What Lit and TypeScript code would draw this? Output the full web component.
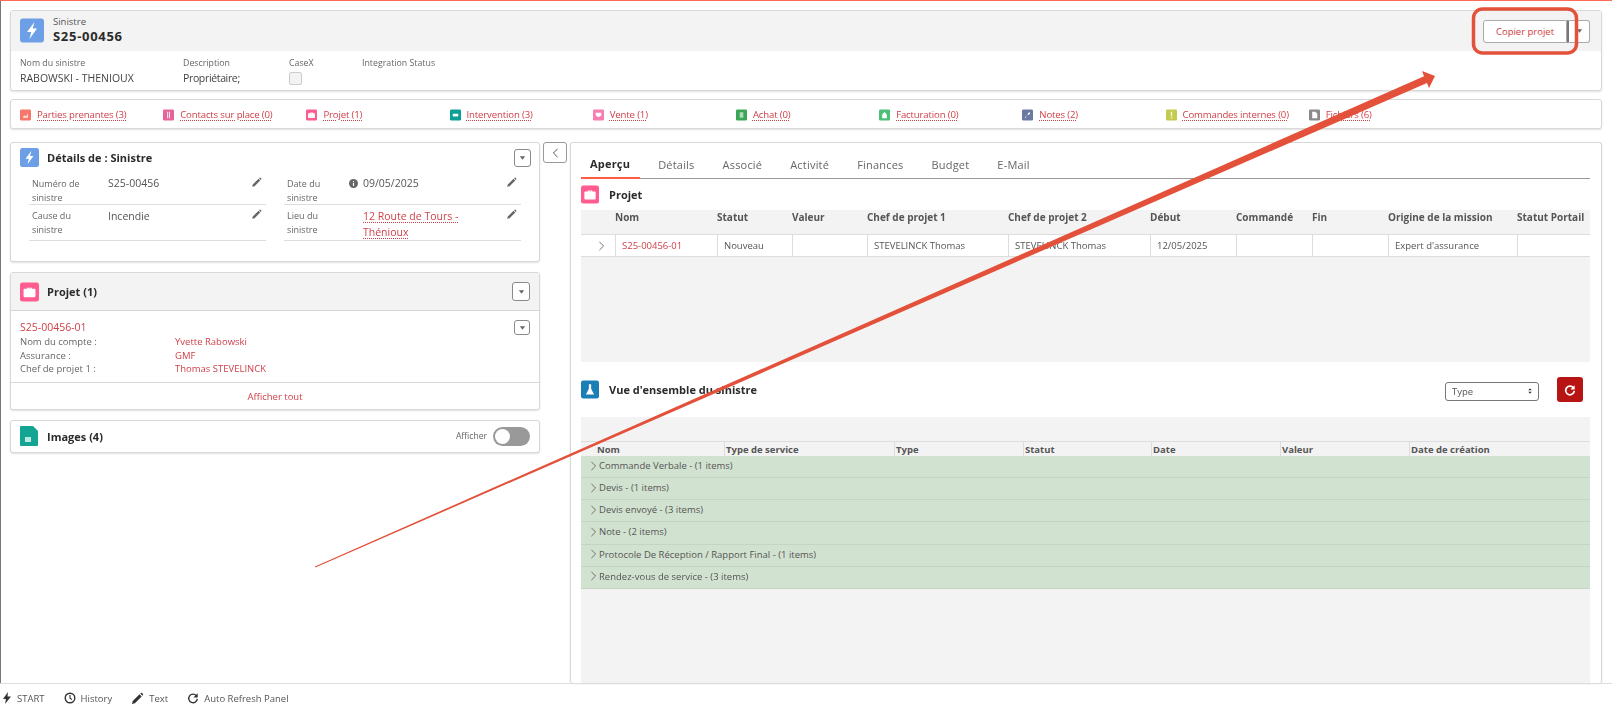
import { LitElement, html, css, svg } from "lit";
import { customElement } from "lit/decorators.js";

const chevronDown = html`<svg class="caret" viewBox="0 0 10 6"><path d="M1 0.5h8L5 5.5z" fill="#666"/></svg>`;
const chevronRight = html`<svg class="chev" viewBox="0 0 8 12"><path d="M1.5 1l5 5-5 5" fill="none" stroke="#666" stroke-width="1.1"/></svg>`;
const pencil = html`<svg class="pencil" viewBox="0 0 14 14"><path d="M1.5 12.5l.8-3L9.6 2.2l2.2 2.2-7.3 7.3zM10.3 1.5l.7-.5c.4-.3.8-.3 1.1 0l1 1c.3.3.3.7 0 1.1l-.5.7z" fill="#666"/></svg>`;

const bolt = svg`<path d="M14.5 3.5L7 13.5h4.2L9.5 20.5l7.5-10.5h-4.3z" fill="#fff"/>`;
const briefcase = svg`<path d="M9 8V6.5h6V8h3.5c.6 0 1 .4 1 1v8.500c0 .6-.4 1-1 1h-13c-.6 0-1-.4-1-1V9c0-.6.4-1 1-1zm1.300 0h3.400V7.500h-3.400z" fill="#fff"/>`;
const glyphs: Record<string, unknown> = {
  person: svg`<path d="M7 18v-2c0-2 2-3 4-3l2 3 4-8v10z" fill="#fff" opacity=".85"/>`,
  contact: svg`<path d="M9 5h2.200v14H9zM13 5h2.200v14H13z" fill="#fff" opacity=".85"/>`,
  case: briefcase,
  work: svg`<rect x="6" y="9" width="12" height="6" rx="1" fill="#fff"/>`,
  sale: svg`<path d="M6 7h12v6l-6 4-6-4z" fill="#fff"/>`,
  buy: svg`<path d="M8 6h8v12H8z" fill="#fff" opacity=".6"/>`,
  invoice: svg`<path d="M12 5l5 6v8H7v-8z" fill="#fff"/>`,
  note: svg`<path d="M6 18l6-6 1-4 3-2 2 2-2 3-4 1-5 7z" fill="#fff"/>`,
  order: svg`<path d="M10.500 5h3v9h-3zM10.500 16h3v3h-3z" fill="#fff" opacity=".8"/>`,
  file: svg`<path d="M7 5h7l4 4v10H7z" fill="#fff"/>`,
};

function tile(color: string, glyph: unknown, cls = "") {
  return html`<svg class="tile ${cls}" viewBox="0 0 24 24"><rect width="24" height="24" rx="3" fill=${color}/>${glyph}</svg>`;
}

const links = [
  ["Parties prenantes (3)", "#f8776c", "person"],
  ["Contacts sur place (0)", "#e5659b", "contact"],
  ["Projet (1)", "#ff5d8f", "case"],
  ["Intervention (3)", "#0b9f95", "work"],
  ["Vente (1)", "#f77eb0", "sale"],
  ["Achat (0)", "#3ba755", "buy"],
  ["Facturation (0)", "#4bc076", "invoice"],
  ["Notes (2)", "#6b7aa3", "note"],
  ["Commandes internes (0)", "#c2cb4f", "order"],
  ["Fichiers (6)", "#8a8a8a", "file"],
];

const projectHead = ["", "Nom", "Statut", "Valeur", "Chef de projet 1", "Chef de projet 2", "Début", "Commandé", "Fin", "Origine de la mission", "Statut Portail"];
const overviewHead = ["", "Nom", "Type de service", "Type", "Statut", "Date", "Valeur", "Date de création"];
const groups = [
  "Commande Verbale - (1 items)",
  "Devis - (1 items)",
  "Devis envoyé - (3 items)",
  "Note - (2 items)",
  "Protocole De Réception / Rapport Final - (1 items)",
  "Rendez-vous de service - (3 items)",
];
const tabs = ["Aperçu", "Détails", "Associé", "Activité", "Finances", "Budget", "E-Mail"];

@customElement("app-root")
export class AppRoot extends LitElement {
  static styles = css`
    :host {
      display: block;
      width: 1612px;
      height: 712px;
      overflow: hidden;
      background: #fff;
      font-family: "Open Sans", "Noto Sans", sans-serif;
      font-size: 10px;
      color: #444;
    }
    .page {
      position: relative;
      height: 712px;
      display: flex;
      flex-direction: column;
      box-sizing: border-box;
      border-top: 1px solid #ff6b57;
      filter: blur(0.35px);
    }
    .main {
      flex: 1;
      min-height: 0;
      box-sizing: border-box;
      border-left: 1px solid #777;
      padding: 9px 10px 0 9px;
      display: flex;
      flex-direction: column;
    }
    .card {
      background: #fff;
      border: 1px solid #d8d8d8;
      border-radius: 3px;
      box-shadow: 0 1px 2px rgba(0, 0, 0, 0.12);
      box-sizing: border-box;
    }
    .tile { display: block; flex: none; }
    .ibtn {
      box-sizing: border-box;
      display: flex;
      align-items: center;
      justify-content: center;
      background: #fff;
      border: 1px solid #8a8a8a;
      border-radius: 3px;
    }
    .caret { width: 7px; height: 4px; display: block; }

    .rec-head {
      height: 40px;
      box-sizing: border-box;
      background: #f3f3f3;
      display: flex;
      align-items: center;
      padding: 0 11px 2px 9px;
    }
    .rec-head .tile { width: 24px; height: 25px; margin-right: 9px; }
    .rec-type { font-size: 9.500px; line-height: 13px; color: #555; }
    .rec-name { font-size: 13px; line-height: 17px; font-weight: 700; color: #2b2b2b; letter-spacing: 0.7px; }
    .actions { margin-left: auto; display: flex; height: 23px; margin-top: 2px; }
    .copy {
      box-sizing: border-box;
      width: 84px;
      display: flex;
      align-items: center;
      justify-content: center;
      border: 1px solid #aaa;
      border-radius: 3px 0 0 3px;
      color: #d0393f;
      background: #fff;
      font-size: 9.500px;
    }
    .copy-more {
      box-sizing: border-box;
      width: 23px;
      display: flex;
      align-items: center;
      justify-content: center;
      border: 1px solid #aaa;
      border-left: 2px solid #777;
      border-radius: 0 3px 3px 0;
      background: #fff;
    }
    .rec-fields {
      height: 39px;
      display: grid;
      grid-template-columns: 163px 106px 73px 1fr;
      padding: 6px 9px 0;
      box-sizing: border-box;
    }
    .f-label { font-size: 8.800px; line-height: 13px; color: #666; }
    .f-value { font-size: 10.500px; line-height: 16px; color: #444; }
    .f-value.narrow { letter-spacing: -0.35px; }
    .check {
      width: 11px;
      height: 11px;
      margin-top: 2px;
      border: 1px solid #ccc;
      border-radius: 2px;
      background: #f3f3f3;
    }

    .links {
      height: 30px;
      margin-top: 8px;
      display: grid;
      grid-template-columns: repeat(10, 143.200px);
      align-items: center;
      padding: 1px 0 0 9px;
    }
    .link { display: flex; align-items: center; gap: 6px; }
    .link .tile { width: 11px; height: 12px; }
    .link a, .dotted {
      color: #cf3f48;
      text-decoration: underline dotted #cf3f48;
      text-underline-offset: 2px;
    }
    .link a { font-size: 9.600px; line-height: 14px; letter-spacing: -0.15px; }

    .cols { flex: 1; min-height: 0; margin-top: 13px; display: flex; }
    .left { width: 530px; flex: none; display: flex; flex-direction: column; gap: 10px; }
    .collapse {
      flex: none;
      width: 24px;
      height: 21px;
      margin: 0 3px 0 3px;
      border-color: #999;
    }
    .collapse svg { width: 7px; height: 10px; }
    .details { height: 120px; padding: 5px 8px 0 9px; }
    .card-title { display: flex; align-items: center; }
    .details .tile { width: 19px; height: 19px; margin-right: 8px; }
    .title { font-size: 11px; font-weight: 700; color: #2b2b2b; }
    .details .ibtn { margin-left: auto; width: 17px; height: 18px; }
    .detail-grid {
      display: grid;
      grid-template-columns: 237px 237px;
      column-gap: 18px;
      margin: 8px 0 0 9px;
    }
    .field {
      display: grid;
      grid-template-columns: 76px 1fr 14px;
      border-bottom: 1px solid #ddd;
      padding: 0 1px 0 3px;
      height: 29px;
      margin-bottom: 2px;
    }
    .field.tall { height: 33px; margin-bottom: 0; }
    .field .lab { font-size: 9px; line-height: 13.500px; color: #666; padding: 2px 26px 0 0; }
    .field .val { font-size: 10.500px; line-height: 15.500px; color: #555; padding-top: 1px; }
    .field.tall .val { padding-top: 2px; }
    .pencil { width: 11px; height: 11px; margin-top: 2px; }
    .info { display: inline-block; width: 9px; height: 9px; vertical-align: -1px; margin: 0 5px 0 -14px; }

    .proj { height: 138px; display: flex; flex-direction: column; }
    .proj-head {
      height: 37px;
      background: #f3f3f3;
      border-bottom: 1px solid #d5d5d5;
      display: flex;
      align-items: center;
      padding: 0 9px;
    }
    .proj-head .tile { width: 19px; height: 20px; margin-right: 8px; }
    .proj-head .ibtn { margin-left: auto; width: 18px; height: 19px; }
    .proj-body { flex: 1; position: relative; padding: 8px 9px 0; }
    .proj-body .ibtn { position: absolute; top: 9px; right: 9px; width: 16px; height: 15px; }
    .red { color: #cf3f48; }
    .proj-id { font-size: 10.500px; line-height: 16px; }
    .kv { display: grid; grid-template-columns: 155px 1fr; font-size: 9.500px; line-height: 13.500px; color: #666; }
    .proj-foot {
      height: 26px;
      border-top: 1px solid #d8d8d8;
      display: flex;
      align-items: center;
      justify-content: center;
      font-size: 9.500px;
    }
    .images {
      height: 33px;
      display: flex;
      align-items: center;
      padding: 0 9px 1px 9px;
    }
    .images .tile { width: 19px; height: 20px; margin-right: 8px; }
    .show { margin-left: auto; font-size: 8.600px; color: #666; margin-right: 6px; }
    .toggle {
      width: 37px;
      height: 19px;
      border-radius: 10px;
      background: #999;
      box-sizing: border-box;
      padding: 2px;
    }
    .toggle i { display: block; width: 15px; height: 15px; border-radius: 50%; background: #fff; }

    .right { flex: 1; min-width: 0; padding: 0 11px 0 10px; border-bottom: none; display: flex; flex-direction: column; }
    .tabs {
      height: 36px;
      flex: none;
      box-sizing: border-box;
      display: flex;
      align-items: flex-end;
      border-bottom: 1px solid #999;
    }
    .tab {
      padding: 0 10px 6px 9px;
      margin-right: 9px;
      font-size: 11px;
      line-height: 15px;
      color: #666;
      letter-spacing: 0.2px;
    }
    .tab.on { color: #2b2b2b; font-weight: 700; border-bottom: 2px solid #ff5a45; margin-bottom: -1px; }
    .sec-title { display: flex; align-items: center; height: 31px; flex: none; }
    .sec-title .tile { width: 18px; height: 19px; margin-right: 10px; }
    .gray { background: #f3f3f3; }
    .ptable { height: 152px; flex: none; }
    .pgrid {
      display: grid;
      grid-template-columns: 34px 102px 75px 75px 141px 142px 86px 76px 76px 129px 73px;
    }
    .phead { height: 24px; font-size: 10px; font-weight: 700; color: #555; line-height: 15px; }
    .prow {
      height: 23px;
      background: #fff;
      border-top: 1px solid #ddd;
      border-bottom: 1px solid #ddd;
      box-sizing: border-box;
      font-size: 9.500px;
      line-height: 21px;
      color: #555;
    }
    .prow > div { border-left: 1px solid #ddd; padding-left: 6px; }
    .prow > div:first-child { border-left: none; padding: 0 10px 0 0; display: flex; justify-content: flex-end; align-items: center; }
    .chev { width: 7px; height: 10px; display: block; flex: none; }
    .ovtitle { height: 55px; flex: none; display: flex; align-items: center; }
    .ovtitle .tile { width: 18px; height: 19px; margin-right: 10px; }
    .sel {
      margin: 3px 0 0 auto;
      box-sizing: border-box;
      width: 94px;
      height: 19px;
      border: 1px solid #777;
      border-radius: 3px;
      display: flex;
      align-items: center;
      padding: 0 6px;
      font-size: 9.500px;
      color: #555;
    }
    .sel svg { margin-left: auto; width: 4px; height: 6px; }
    .refresh {
      width: 26px;
      height: 25px;
      margin: 0 7px 0 18px;
      background: #b81414;
      border-radius: 3px;
      display: flex;
      align-items: center;
      justify-content: center;
    }
    .refresh svg { width: 12px; height: 12px; }
    .otable { flex: 1; min-height: 0; }
    .ospace { height: 24px; }
    .ohead {
      height: 14px;
      border-top: 1px solid #ddd;
      display: grid;
      grid-template-columns: 15px 128px 170px 129px 128px 129px 129px 181px;
      font-size: 9.500px;
      font-weight: 700;
      line-height: 15px;
      color: #555;
    }
    .ohead > div { border-left: 1px solid #ddd; padding-left: 1px; }
    .ohead > div:first-child, .ohead > div:nth-child(2) { border-left: none; }
    .ogroup {
      height: 22.150px;
      box-sizing: border-box;
      background: #d2e2d0;
      border-bottom: 1px solid #c5d4c3;
      display: flex;
      align-items: center;
      gap: 2px;
      padding: 0 0 2px 9px;
      font-size: 9.500px;
      color: #555;
    }
    .footer {
      height: 28px;
      flex: none;
      border-top: 1px solid #ddd;
      display: flex;
      align-items: center;
      padding-left: 2px;
      font-size: 9.500px;
      color: #555;
    }
    .tool { display: flex; align-items: center; margin-right: 19px; }
    .tool svg { display: block; margin-right: 5px; }
    .overlay { position: absolute; left: 0; top: -1px; width: 1612px; height: 712px; pointer-events: none; }
  `;

  render() {
    return html`
      <div class="page">
        <div class="main">
          <div class="card">
            <div class="rec-head">
              ${tile("#6c9fe6", bolt)}
              <div>
                <div class="rec-type">Sinistre</div>
                <div class="rec-name">S25-00456</div>
              </div>
              <div class="actions">
                <div class="copy">Copier projet</div>
                <div class="copy-more">${chevronDown}</div>
              </div>
            </div>
            <div class="rec-fields">
              <div><div class="f-label">Nom du sinistre</div><div class="f-value">RABOWSKI - THENIOUX</div></div>
              <div><div class="f-label">Description</div><div class="f-value narrow">Propriétaire;</div></div>
              <div><div class="f-label">CaseX</div><div class="check"></div></div>
              <div><div class="f-label">Integration Status</div></div>
            </div>
          </div>

          <div class="card links">
            ${links.map(
              ([label, color, glyph]) => html`<div class="link">${tile(color, glyphs[glyph])}<a>${label}</a></div>`
            )}
          </div>

          <div class="cols">
            <div class="left">
              <div class="card details">
                <div class="card-title">
                  ${tile("#6c9fe6", bolt)}
                  <span class="title">Détails de : Sinistre</span>
                  <div class="ibtn">${chevronDown}</div>
                </div>
                <div class="detail-grid">
                  <div class="field">
                    <div class="lab">Numéro de sinistre</div><div class="val">S25-00456</div>${pencil}
                  </div>
                  <div class="field">
                    <div class="lab">Date du sinistre</div>
                    <div class="val">
                      <svg class="info" viewBox="0 0 10 10"><circle cx="5" cy="5" r="5" fill="#666"/><path d="M4.400 4.300h1.200v3.500H4.400zM4.400 2.200h1.200v1.200H4.400z" fill="#fff"/></svg>09/05/2025
                    </div>
                    ${pencil}
                  </div>
                  <div class="field tall">
                    <div class="lab">Cause du sinistre</div><div class="val">Incendie</div>${pencil}
                  </div>
                  <div class="field tall">
                    <div class="lab">Lieu du sinistre</div>
                    <div class="val"><span class="dotted">12 Route de Tours - Thénioux</span></div>
                    ${pencil}
                  </div>
                </div>
              </div>

              <div class="card proj">
                <div class="proj-head">
                  ${tile("#ff5d8f", briefcase)}
                  <span class="title">Projet (1)</span>
                  <div class="ibtn">${chevronDown}</div>
                </div>
                <div class="proj-body">
                  <div class="proj-id red">S25-00456-01</div>
                  <div class="kv">
                    <span>Nom du compte :</span><span class="red">Yvette Rabowski</span>
                    <span>Assurance :</span><span class="red">GMF</span>
                    <span>Chef de projet 1 :</span><span class="red">Thomas STEVELINCK</span>
                  </div>
                  <div class="ibtn">${chevronDown}</div>
                </div>
                <div class="proj-foot red">Afficher tout</div>
              </div>

              <div class="card images">
                <svg class="tile" viewBox="0 0 19 20"><path d="M1 0h12l5 5v14a1 1 0 0 1-1 1H1a1 1 0 0 1-1-1V1a1 1 0 0 1 1-1z" fill="#12a594"/><rect x="5" y="11" width="6" height="5" fill="#bfe6e0"/></svg>
                <span class="title">Images (4)</span>
                <span class="show">Afficher</span>
                <div class="toggle"><i></i></div>
              </div>
            </div>

            <div class="ibtn collapse">
              <svg viewBox="0 0 8 12"><path d="M6.500 1l-5 5 5 5" fill="none" stroke="#555" stroke-width="1.200"/></svg>
            </div>

            <div class="card right">
              <div class="tabs">
                ${tabs.map((t, i) => html`<div class="tab ${i === 0 ? "on" : ""}">${t}</div>`)}
              </div>
              <div class="sec-title">${tile("#ff5d8f", briefcase)}<span class="title">Projet</span></div>
              <div class="gray ptable">
                <div class="pgrid phead">${projectHead.map((h) => html`<div>${h}</div>`)}</div>
                <div class="pgrid prow">
                  <div>${chevronRight}</div>
                  <div class="red">S25-00456-01</div>
                  <div>Nouveau</div>
                  <div></div>
                  <div>STEVELINCK Thomas</div>
                  <div>STEVELINCK Thomas</div>
                  <div>12/05/2025</div>
                  <div></div>
                  <div></div>
                  <div>Expert d'assurance</div>
                  <div></div>
                </div>
              </div>
              <div class="ovtitle">
                <svg class="tile" viewBox="0 0 24 24">
                  <rect width="24" height="24" rx="3" fill="#1b7fb5"/>
                  <path d="M10.500 5h3v6l4 7.500H6.500l4-7.500z" fill="#fff"/>
                </svg>
                <span class="title">Vue d'ensemble du sinistre</span>
                <div class="sel">
                  Type
                  <svg viewBox="0 0 6 8"><path d="M3 0l2.500 3h-5zM3 8L.5 5h5z" fill="#333"/></svg>
                </div>
                <div class="refresh">
                  <svg viewBox="0 0 14 14"><path d="M11 4.500A5 5 0 1 0 12 8" fill="none" stroke="#fff" stroke-width="2"/><path d="M12.500 1.500v5h-5z" fill="#fff"/></svg>
                </div>
              </div>
              <div class="gray otable">
                <div class="ospace"></div>
                <div class="ohead">${overviewHead.map((h) => html`<div>${h}</div>`)}</div>
                ${groups.map((g) => html`<div class="ogroup">${chevronRight}<span>${g}</span></div>`)}
              </div>
            </div>
          </div>
        </div>

        <div class="footer">
          <div class="tool">
            <svg width="10" height="12" viewBox="0 0 10 12"><path d="M6 0L1 7h3l-1 5 6-7.500H5.500z" fill="#333"/></svg>START
          </div>
          <div class="tool">
            <svg width="12" height="12" viewBox="0 0 12 12"><circle cx="6" cy="6" r="4.800" fill="none" stroke="#333" stroke-width="1.400"/><path d="M6 3v3.200l2 1.300" fill="none" stroke="#333" stroke-width="1.100"/></svg>History
          </div>
          <div class="tool">
            <svg width="13" height="13" viewBox="0 0 14 14"><path d="M1 13l.9-3.200 7.300-7.300 2.300 2.300-7.300 7.300zM10 1.700l.8-.6c.4-.3.8-.3 1.100 0l1 1c.3.3.3.7 0 1.100l-.6.8z" fill="#333"/></svg>Text
          </div>
          <div class="tool">
            <svg width="12" height="12" viewBox="0 0 14 14"><path d="M11 4.500A5 5 0 1 0 12 8" fill="none" stroke="#333" stroke-width="1.600"/><path d="M12.500 1.500v5h-5z" fill="#333"/></svg>Auto Refresh Panel
          </div>
        </div>

        <svg class="overlay" viewBox="0 0 1612 712">
          <rect x="1473.500" y="9" width="103" height="44" rx="9" fill="none" stroke="#e4513a" stroke-width="3.500"/>
          <path d="M315 566.500L1424 76.300L1422 71L1435 76L1429 88L1427 83L315.400 567.400z" fill="#e4513a"/>
        </svg>
      </div>
    `;
  }
}
